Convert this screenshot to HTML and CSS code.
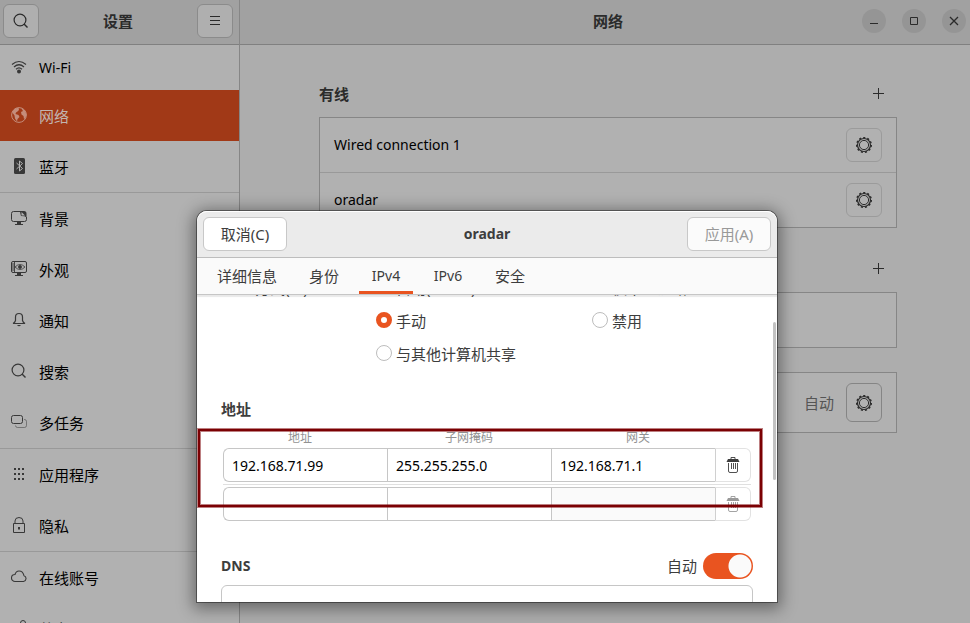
FILE: index.html
```html
<!DOCTYPE html>
<html lang="zh-CN">
<head>
<meta charset="utf-8">
<title>设置</title>
<link rel="stylesheet" href="styles.css">
</head>
<body>
<svg class="defs" aria-hidden="true">
  <symbol id="gear" viewBox="0 0 16 16">
    <circle cx="8" cy="8" r="6.500" fill="none" stroke="currentColor" stroke-width="1.2"/>
    <circle cx="8" cy="8" r="7.300" fill="none" stroke="currentColor" stroke-width="1.4" stroke-dasharray="2.1 2.07"/>
    <circle cx="8" cy="8" r="4.6" fill="none" stroke="currentColor" stroke-width="1"/>
  </symbol>
  <symbol id="trash" viewBox="0 0 14 16">
    <path d="M5 2V.500h4V2M2.500 6v8q0 1.500 1.500 1.500h6q1.500 0 1.500-1.500V6M5.500 6v6M7.500 6v6M9.500 6v6" fill="none" stroke="currentColor" stroke-width=".9"/>
    <path d="M2 2h10l1.500 3h-13z" fill="currentColor"/>
  </symbol>
  <symbol id="plus" viewBox="0 0 12 12">
    <path d="M5.500 0v11M0 5.500h11" fill="none" stroke="currentColor"/>
  </symbol>
  <symbol id="search" viewBox="0 0 16 16">
    <circle cx="7" cy="7" r="5.900" fill="none" stroke="currentColor" stroke-width="1.200"/>
    <path d="M11 11l3.500 3.500" stroke="currentColor" stroke-width="1.400"/>
  </symbol>
</svg>
<div class="window">
  <aside class="sidebar">
    <header class="bar side-bar">
      <button class="square" aria-label="搜索"><svg class="icon"><use href="#search"/></svg></button>
      <h1>设置</h1>
      <button class="square" aria-label="菜单"><svg class="icon" viewBox="0 0 16 16"><path d="M3 3.500h10M3 7.500h10M3 11.500h10" stroke="currentColor"/></svg></button>
    </header>
    <nav>
      <a href="#wifi" class="latin short"><svg class="icon" viewBox="0 0 16 16" fill="none" stroke="currentColor" stroke-width="1.200"><path d="M1 5.500Q8-.500 15 5.500M3 8q5-4.500 10 0M5 10.200q3-2.700 6 0"/><circle cx="8" cy="12.500" r="2" fill="currentColor" stroke="none"/></svg>Wi-Fi</a>
      <a href="#network" class="active"><svg class="icon" viewBox="0 0 16 16"><circle cx="8" cy="8" r="7.400" fill="none" stroke="currentColor" stroke-width="1"/><path d="M1 5l3-3.500L7.500.800 8 3 6.500 4.500 5 5.500l-.500 1.500 3 1 1 2-2 2-.500 2.500-2-3-.500-3zM10 1l4 2.500 1.500 4-1 3.500-1.500 1-.500-3-2-1.500-.500-2.500 2-1z" fill="currentColor"/></svg>网络</a>
      <a href="#bluetooth"><svg class="icon" viewBox="0 0 16 16"><rect x="3" width="11" height="16" rx="1.500" fill="currentColor"/><path d="M5.500 5l6 5.500L8.500 13V3l3 2.500-6 5.500" fill="none" stroke="#b1b1b1"/></svg>蓝牙</a>
      <hr>
      <a href="#background"><svg class="icon" viewBox="0 0 16 16"><path d="M10 1.500H2.500q-2 0-2 2v6q0 2 2 2h11q2 0 2-2V7" fill="none" stroke="currentColor"/><path d="M13 1q2.500 0 2.500 2.500V7h-1q-.500-1-4.500-1Q9 3 9 1z" fill="currentColor"/><path d="M10.500 2l3.500 3.500h-3.500z" fill="#b1b1b1"/><path d="M6 12h4v2h2v1H4v-1h2z" fill="currentColor"/></svg>背景</a>
      <a href="#appearance"><svg class="icon" viewBox="0 0 16 16" fill="none" stroke="currentColor"><rect x=".500" y=".500" width="15" height="11" rx="1.500"/><path d="M3.500 1v11M1 3h2M1 5h2M1 7h2M1 9h2" stroke-width=".9"/><path d="M4 6q5-5 10 0-5 5-10 0z" stroke-width=".8"/><circle cx="9" cy="6" r="1.400" fill="currentColor"/><path d="M6 12h4v2h2v1H4v-1h2z" fill="currentColor" stroke="none"/></svg>外观</a>
      <a href="#notifications"><svg class="icon" viewBox="0 0 16 16"><path d="M2 11.500h12q-2-1-2.500-3V5q0-3.500-3.500-3.500T4.500 5v3.500q-.500 2-2.500 3" fill="none" stroke="currentColor" stroke-width="1.200"/><path d="M6 13h4q-2 2.500-4 0z" fill="currentColor"/></svg>通知</a>
      <a href="#search-settings"><svg class="icon"><use href="#search"/></svg>搜索</a>
      <a href="#multitasking"><svg class="icon" viewBox="0 0 16 16" fill="none" stroke="currentColor"><rect x=".500" y="1.500" width="11" height="8" rx="2"/><path d="M13 5.500h.500q2 0 2 2v4q0 2-2 2h-7q-2 0-2-2" opacity=".5"/></svg>多任务</a>
      <hr>
      <a href="#apps"><svg class="icon" viewBox="0 0 16 16"><path d="M3 3h12M3 8h12M3 13h12" stroke="currentColor" stroke-width="2" stroke-dasharray="2 2"/></svg>应用程序</a>
      <a href="#privacy"><svg class="icon" viewBox="0 0 16 16" fill="none" stroke="currentColor"><path d="M2.500 6.500h11v9h-11zM4 6V4q0-3.500 4-3.500T12 4v2"/><path d="M7 10h2v2.500H7z" fill="currentColor" stroke="none"/></svg>隐私</a>
      <hr>
      <a href="#accounts"><svg class="icon" viewBox="0 0 16 16"><path d="M4 12.500h8.500a3 3 0 0 0 .500-5.800Q12 2 8 2 5 2 4 5.500a3.500 3.500 0 0 0 0 7z" fill="none" stroke="currentColor" stroke-width="1.100"/></svg>在线账号</a>
      <a href="#sharing"><svg class="icon" viewBox="0 0 16 16" fill="none" stroke="currentColor"><circle cx="12" cy="3" r="2.500"/><circle cx="3" cy="8" r="2.500"/><circle cx="12" cy="13" r="2.500"/><path d="M5 7l5-3M5 9l5 3"/></svg>共享</a>
    </nav>
  </aside>
  <main>
    <header class="bar main-bar">
      <h1>网络</h1>
      <div class="controls">
        <button aria-label="最小化"><svg class="small" viewBox="0 0 12 12"><path d="M2 8.500h8" stroke="currentColor"/></svg></button>
        <button aria-label="最大化"><svg class="small" viewBox="0 0 12 12"><path d="M2.500 2.500h7v7h-7z" fill="none" stroke="currentColor"/></svg></button>
        <button aria-label="关闭"><svg class="small" viewBox="0 0 12 12"><path d="M2 2l8 8M10 2l-8 8" stroke="currentColor" stroke-width="1.300"/></svg></button>
      </div>
    </header>
    <div class="page">
      <section>
        <div class="head"><h2>有线</h2><button class="add" aria-label="添加有线连接"><svg class="small"><use href="#plus"/></svg></button></div>
        <ul class="list">
          <li class="latin">Wired connection 1<button class="gear" aria-label="选项"><svg class="icon"><use href="#gear"/></svg></button></li>
          <li class="latin">oradar<button class="gear" aria-label="选项"><svg class="icon"><use href="#gear"/></svg></button></li>
        </ul>
      </section>
      <section>
        <div class="head end"><button class="add" aria-label="添加 VPN"><svg class="small"><use href="#plus"/></svg></button></div>
        <ul class="list"><li></li></ul>
      </section>
      <ul class="list proxy"><li><span class="state">自动</span><button class="gear tall" aria-label="代理选项"><svg class="icon"><use href="#gear"/></svg></button></li></ul>
    </div>
  </main>
</div>

<div class="dialog" role="dialog" aria-label="oradar">
  <header class="dialog-bar">
    <button>取消(C)</button>
    <h1 class="latin">oradar</h1>
    <button disabled>应用(A)</button>
  </header>
  <nav class="tabs">
    <button>详细信息</button><button>身份</button><button class="latin current">IPv4</button><button class="latin">IPv6</button><button>安全</button>
  </nav>
  <div class="scroll">
    <form class="form">
      <fieldset class="method">
        <span class="caption">IPv4 方式(M)</span>
        <label><input type="radio" name="m">自动(DHCP)</label>
        <label><input type="radio" name="m">仅本地链路</label>
        <label class="second"><input type="radio" name="m" checked>手动</label>
        <label><input type="radio" name="m">禁用</label>
        <label class="second"><input type="radio" name="m">与其他计算机共享</label>
      </fieldset>
      <h2>地址</h2>
      <table>
        <thead><tr><th id="addr">地址</th><th id="mask">子网掩码</th><th id="gate">网关</th><td></td></tr></thead>
        <tbody>
          <tr><td><input aria-labelledby="addr" value="192.168.71.99"></td><td><input aria-labelledby="mask" value="255.255.255.0"></td><td><input aria-labelledby="gate" value="192.168.71.1"></td><td><button type="button" aria-label="删除"><svg class="trash"><use href="#trash"/></svg></button></td></tr>
          <tr><td><input aria-labelledby="addr"></td><td><input aria-labelledby="mask"></td><td><input aria-labelledby="gate" disabled></td><td><button type="button" aria-label="删除" disabled><svg class="trash"><use href="#trash"/></svg></button></td></tr>
        </tbody>
      </table>
      <div class="dns"><h2 class="latin">DNS</h2><label for="auto">自动</label><input type="checkbox" class="switch" id="auto" checked></div>
      <input class="servers" aria-label="DNS">
    </form>
    <div class="thumb"></div>
  </div>
  <div class="marker"></div>
</div>
</body>
</html>
```
FILE: styles.css
```css
* { box-sizing: border-box; }
body {
  margin: 0;
  height: 100vh;
  overflow: hidden;
  position: relative;
  background: #adadad;
  color: #2b2b2b;
  font: 15px/20px "Noto Sans", "Noto Sans CJK SC", sans-serif;
}
button, input { font: inherit; color: inherit; }
button { padding: 0; display: flex; align-items: center; justify-content: center; }
h1, h2, ul { margin: 0; padding: 0; font-size: 15px; }
ul { list-style: none; }
.latin { font-size: 14px; }
.defs { position: absolute; width: 0; height: 0; }
.icon { width: 16px; height: 16px; flex: none; }
.small { width: 12px; height: 12px; }

.window { display: flex; height: 100%; }
.sidebar { width: 240px; flex: none; background: #b1b1b1; border-right: 1px solid #868686; }
.bar { height: 45px; display: flex; align-items: center; background: #a1a1a1; border-bottom: 1px solid #808080; }
.side-bar { justify-content: space-between; padding: 0 6px 2px 3px; }
.square { width: 36px; height: 34px; border: 1px solid #8b8b8b; border-radius: 6px; background: #afafaf; }
nav a { display: flex; align-items: center; gap: 12px; height: 51px; padding-left: 11px; color: #000; text-decoration: none; }
nav a.short { height: 45px; }
nav a .icon { color: #383838; margin-bottom: 1px; }
nav a.active { background: #a13917; color: #c2b5b0; }
nav a.active .icon { color: #c58d7b; }
nav hr { margin: 0; border: 0; border-top: 1px solid #999; }

main { flex: 1; min-width: 0; }
.main-bar { display: grid; grid-template-columns: 98px 1fr 88px; padding: 0 4px 2px 0; text-align: center; }
.main-bar h1 { grid-column: 2; }
.controls { display: flex; justify-content: flex-end; gap: 16px; }
.controls button { width: 24px; height: 24px; border: 0; border-radius: 50%; background: #959595; flex: none; }
.page { padding: 36px 73px 0 79px; }
.head { display: flex; justify-content: space-between; align-items: center; height: 26px; margin-bottom: 10px; padding-right: 12px; }
.head.end { justify-content: flex-end; }
.add { border: 0; background: none; }
.list { border: 1px solid #868686; background: #b1b1b1; }
.list li { display: flex; align-items: center; height: 54px; padding: 0 14px; color: #000; }
.list li + li { border-top: 1px solid #999; height: 55px; }
.gear { width: 36px; height: 34px; margin-left: auto; border: 1px solid #9b9b9b; border-radius: 6px; background: none; color: #2b2b2b; }
.tall { height: 39px; margin-left: 12px; border-color: #858585; }
section { margin-bottom: 28px; }
.proxy { margin-top: -4px; }
.list.proxy li { height: 59px; }
.state { margin-left: auto; color: #555; }

.dialog {
  position: absolute; left: 197px; right: 193px; top: 211px; bottom: 21px;
  display: flex; flex-direction: column;
  color: #3d3d3d; background: #fff; border-radius: 10px 10px 0 0;
  box-shadow: 0 0 0 1px rgba(0,0,0,.4), 0 3px 16px 4px rgba(0,0,0,.4);
}
.dialog-bar { height: 47px; display: flex; align-items: center; justify-content: space-between; padding: 0 6px; background: #ebebeb; border-bottom: 1px solid #bdbdbd; border-radius: 10px 10px 0 0; box-shadow: inset 0 1px #fff; }
.dialog-bar button { width: 84px; height: 34px; border: 1px solid #c8c8c8; border-radius: 6px; background: #fff; }
.dialog-bar button:disabled { color: #999; background: #fbfbfb; }
.tabs { height: 37px; flex: none; display: flex; gap: 8px; padding-left: 8px; background: #fafafa; border-bottom: 1px solid #c6c6c6; }
.tabs button { min-width: 54px; border: 0; border-bottom: 3px solid transparent; padding: 3px 12px 0; background: none; }
.tabs .current { border-color: #e95420; }
.scroll { flex: 1; min-height: 0; overflow: hidden; display: flex; box-shadow: inset 0 2px 1px #e9e9e9; }
.form { flex: 1; margin-top: -24px; padding: 0 24px; }
.method { border: 0; margin: 0 0 29px; padding: 0; display: grid; grid-template-columns: 155px 216px 1fr; grid-auto-rows: 33px; align-items: center; }
.method label { display: flex; align-items: center; gap: 4px; }
.method .second { grid-column: 2; }
.caption { padding-right: 74px; white-space: nowrap; direction: rtl; unicode-bidi: plaintext; }
input[type=radio] { appearance: none; width: 16px; height: 16px; margin: 0 0 2px; border: 1px solid #bdbdbd; border-radius: 50%; background: #fff; }
input[type=radio]:checked { border: 5px solid #e95420; }
table { border-collapse: separate; border-spacing: 0; width: calc(100% - 4px); margin: 9px 0 0 2px; table-layout: fixed; }
th, td { padding: 0; }
th { font-size: 12px; font-weight: 400; color: #929292; line-height: 20px; }
th:first-child { padding-right: 10px; }
th:nth-child(3) { padding-left: 10px; }
thead td { width: 36px; }
tbody td { height: 36px; vertical-align: top; }
tbody tr + tr td { padding-top: 2px; border-top: 1px solid #e0e0e0; }
tbody input { display: block; width: 100%; height: 34px; padding: 0 8px; border: 1px solid #c6c6c6; border-right: 0; border-radius: 0; font-size: 14px; color: #000; background: #fff; }
tbody td:first-child input { border-radius: 6px 0 0 6px; }
tbody input:disabled { background: #fafafa; }
tbody button { width: 100%; height: 34px; border: 1px solid #e2e2e2; border-left-color: #d0d0d0; border-radius: 0 6px 6px 0; background: #fff; }
tbody button:disabled { color: #999; }
.trash { width: 14px; height: 16px; }
.dns { display: flex; align-items: center; margin-top: 32px; }
.dns label { margin-left: auto; padding-right: 6px; }
.switch { appearance: none; width: 50px; height: 26px; margin: 0; border-radius: 13px; background: radial-gradient(circle at 37px 13px, #fafafa 11px, #e95420 12px); }
.servers { display: block; width: 100%; height: 34px; margin-top: 6px; border: 1px solid #c6c6c6; border-radius: 6px; }
.thumb { width: 3px; height: 158px; margin: 27px 1px 0 -4px; border-radius: 2px; background: #c2c2c2; }
.marker { position: absolute; left: 1px; top: 218px; right: 15px; height: 78px; border: 2px solid #7b0003; box-shadow: 0 0 0 1px rgba(123,0,3,.5), inset 0 0 0 1px rgba(123,0,3,.5); pointer-events: none; }
```
